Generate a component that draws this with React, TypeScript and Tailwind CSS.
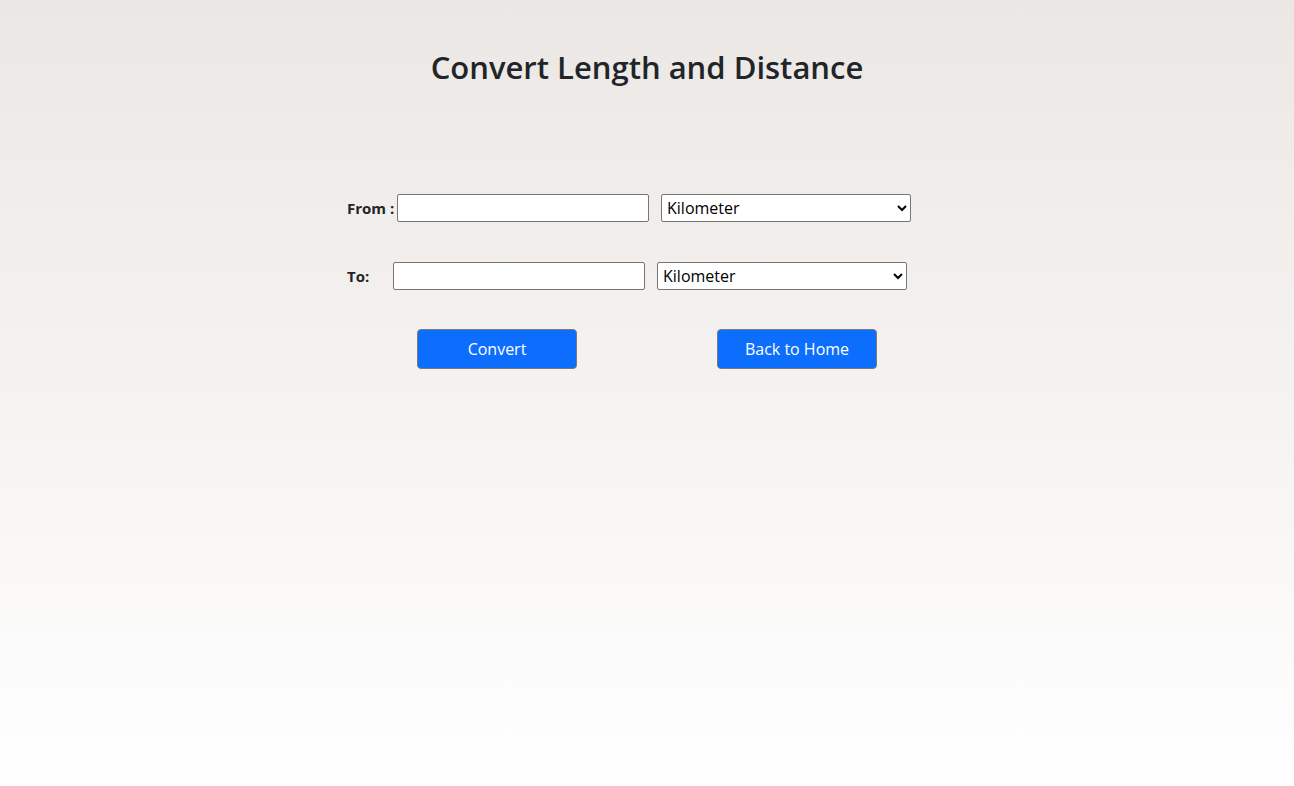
export default function App() {
  return (
    <div className="min-h-[786px] w-full bg-gradient-to-b from-[#ebe7e4] to-[#ffffff] font-['Open_Sans',sans-serif] text-[#212529]">
      <h2 className="pt-[46px] text-center text-[31px] font-semibold leading-[42px]">
        Convert Length and Distance
      </h2>

      <div className="mx-auto mt-[106px] w-[600px]">
        <div className="flex h-[28px] items-center">
          <label className="w-[50px] text-[15px] font-bold">From :</label>
          <input
            type="text"
            className="h-[28px] w-[252px] rounded-[2px] border border-[#767676] bg-white px-1 outline-none"
          />
          <select className="ml-[12px] h-[28px] w-[250px] rounded-[2px] border border-[#767676] bg-white pl-[1px] text-[16px] text-black">
            <option>Kilometer</option>
          </select>
        </div>

        <div className="mt-[40px] flex h-[28px] items-center">
          <label className="w-[46px] text-[15px] font-bold">To:</label>
          <input
            type="text"
            className="h-[28px] w-[252px] rounded-[2px] border border-[#767676] bg-white px-1 outline-none"
          />
          <select className="ml-[12px] h-[28px] w-[250px] rounded-[2px] border border-[#767676] bg-white pl-[1px] text-[16px] text-black">
            <option>Kilometer</option>
          </select>
        </div>
      </div>

      <div className="mt-[39px] flex justify-center gap-[140px]">
        <button className="h-[40px] w-[160px] rounded-[4px] border border-[#7a7a7a] bg-[#0d6efd] text-[16px] text-white">
          Convert
        </button>
        <button className="h-[40px] w-[160px] rounded-[4px] border border-[#7a7a7a] bg-[#0d6efd] text-[16px] text-white">
          Back to Home
        </button>
      </div>
    </div>
  );
}
